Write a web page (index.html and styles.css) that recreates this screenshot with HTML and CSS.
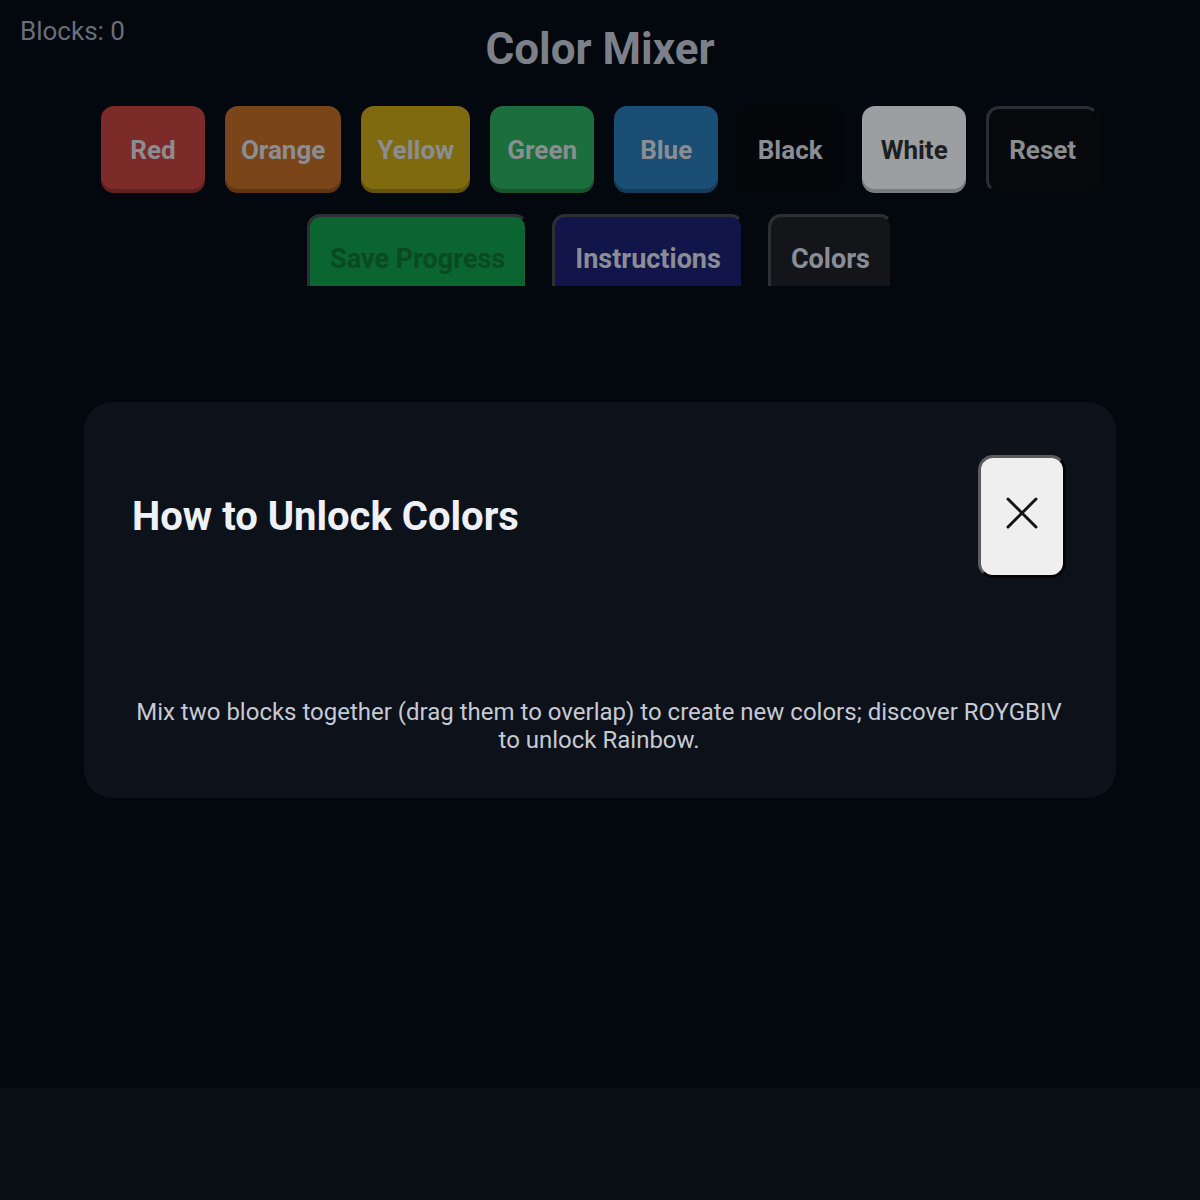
FILE: index.html
```html
<!DOCTYPE html>
<html lang="en">
<head>
<meta charset="utf-8">
<title>Color Mixer</title>
<link rel="stylesheet" href="styles.css">
</head>
<body>
<div class="app">
  <div class="counter">Blocks: 0</div>
  <header class="header">
    <h1 class="title">Color Mixer</h1>
    <div class="row row-colors">
      <button class="btn btn-red">Red</button>
      <button class="btn btn-orange">Orange</button>
      <button class="btn btn-yellow">Yellow</button>
      <button class="btn btn-green">Green</button>
      <button class="btn btn-blue">Blue</button>
      <button class="btn btn-black">Black</button>
      <button class="btn btn-white">White</button>
      <button class="btn btn-reset">Reset</button>
    </div>
    <div class="row row-actions">
      <button class="tab tab-save">Save Progress</button>
      <button class="tab tab-help">Instructions</button>
      <button class="tab tab-colors">Colors</button>
    </div>
  </header>
  <main class="canvas"></main>
  <footer class="footer"></footer>
</div>

<div class="overlay">
  <section class="modal">
    <div class="modal-head">
      <h2 class="modal-title">How to Unlock Colors</h2>
      <button class="close" aria-label="Close">
        <svg width="32" height="32" viewBox="0 0 32 32" aria-hidden="true">
          <path d="M2 2 L30 30 M30 2 L2 30" stroke="#141414" stroke-width="3" stroke-linecap="round" fill="none"/>
        </svg>
      </button>
    </div>
    <p class="modal-text">Mix two blocks together (drag them to overlap) to create new colors; discover ROYGBIV to unlock Rainbow.</p>
  </section>
</div>
</body>
</html>
```

FILE: styles.css
```css
* { box-sizing: border-box; }

html, body {
  margin: 0;
  padding: 0;
}

body {
  background: #03070e;
  font-family: Roboto, "Noto Sans", "Liberation Sans", sans-serif;
  width: 1200px;
  height: 1200px;
  overflow: hidden;
}

.app {
  position: relative;
  display: flex;
  flex-direction: column;
  height: 1200px;
}

.counter {
  position: absolute;
  top: 16px;
  left: 20px;
  font-size: 26px;
  line-height: 30px;
  color: #6a6f77;
}

.header {
  height: 286px;
  overflow: hidden;
  display: flex;
  flex-direction: column;
  align-items: center;
  flex-shrink: 0;
}

.title {
  margin: 24px 0 0;
  font-size: 44px;
  line-height: 50px;
  font-weight: 700;
  color: #7c8088;
}

.row {
  display: flex;
  justify-content: center;
}

.row-colors {
  margin-top: 32px;
  gap: 20px;
}

.row-actions {
  margin-top: 21px;
  gap: 24px;
}

.btn {
  font-family: inherit;
  font-size: 26px;
  font-weight: 700;
  line-height: 30px;
  min-width: 104px;
  height: 87px;
  padding: 0 16px;
  border: none;
  border-radius: 13px;
  color: #8a8d92;
  box-shadow: inset 0 -4px 0 rgba(0, 0, 0, 0.22);
}

.btn-red { background: #7d2b28; }
.btn-orange { background: #7a4519; }
.btn-yellow { background: #7f6a0f; }
.btn-green { background: #1c6e3c; }
.btn-blue { background: #1a4e74; }
.btn-black { background: #04060a; box-shadow: none; }
.btn-white { background: #9c9ea2; color: #1d1e22; }
.btn-reset {
  background: #08090c;
  padding: 0 20px;
  border: 3px solid #08090c;
  border-top-color: #2a2d31;
  border-left-color: #2a2d31;
  box-shadow: none;
}

.tab {
  font-family: inherit;
  font-size: 27px;
  font-weight: 700;
  line-height: 30px;
  height: 90px;
  padding: 0 20px;
  border: 3px solid #060709;
  border-top-color: #2c2f34;
  border-left-color: #2c2f34;
  border-radius: 13px;
  color: #8a8d95;
}

.tab-save { background: #0b6530; color: #0a4a21; }
.tab-help { background: #12154a; }
.tab-colors { background: #141519; }

.canvas {
  flex: 1;
}

.footer {
  height: 112px;
  flex-shrink: 0;
  background: #0a0e15;
}

.overlay {
  position: fixed;
  inset: 0;
  display: flex;
  align-items: center;
  justify-content: center;
}

.modal {
  width: 1032px;
  height: 396px;
  background: #0d1119;
  border-radius: 28px;
  padding: 53px 50px 44px 48px;
  display: flex;
  flex-direction: column;
}

.modal-head {
  display: flex;
  align-items: center;
  justify-content: space-between;
}

.modal-title {
  margin: 0;
  font-size: 40px;
  font-weight: 700;
  line-height: 46px;
  color: #eef2f8;
}

.close {
  width: 88px;
  height: 123px;
  display: flex;
  align-items: center;
  justify-content: center;
  background: #efefef;
  border: 3px solid #050505;
  border-top-color: #5a5c60;
  border-left-color: #5a5c60;
  border-radius: 15px;
  padding: 0 0 8px;
}

.close svg { display: block; }

.modal-text {
  margin: auto 0 0;
  font-size: 24px;
  line-height: 28px;
  text-align: center;
  color: #c5cad3;
}
```
